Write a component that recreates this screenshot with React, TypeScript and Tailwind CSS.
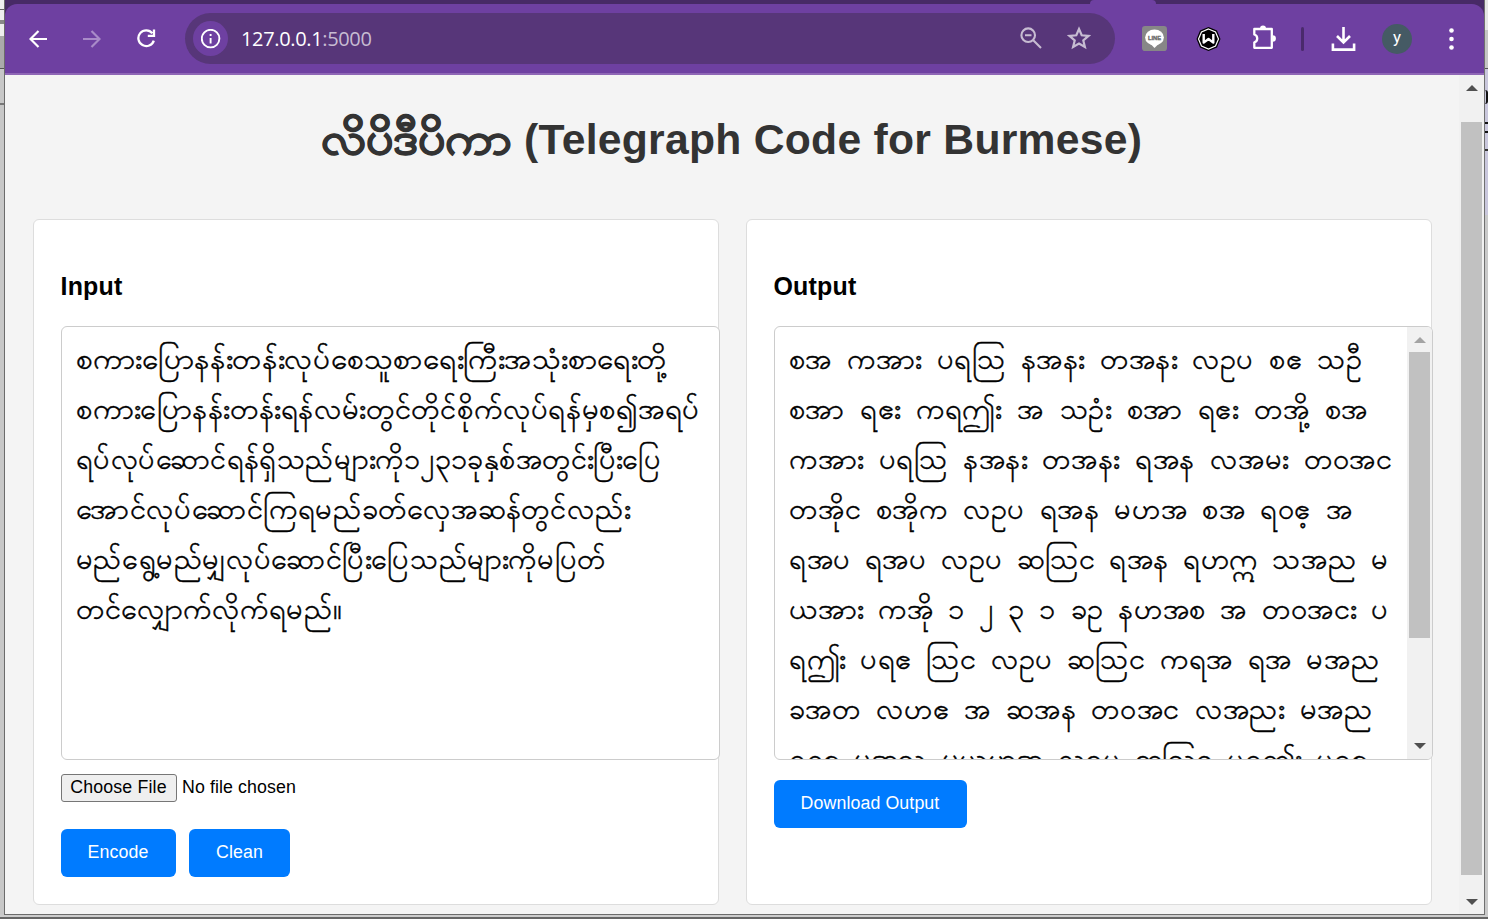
import { ReactNode, useLayoutEffect, useRef, useState } from "react";

type Line = { text: string; width: number };

const inputLines: Line[] = [
  { text: "စကားပြောနန်းတန်းလုပ်စေသူစာရေးကြီးအသုံးစာရေးတို့", width: 591 },
  { text: "စကားပြောနန်းတန်းရန်လမ်းတွင်တိုင်စိုက်လုပ်ရန်မှစ၍အရပ်", width: 624 },
  { text: "ရပ်လုပ်ဆောင်ရန်ရှိသည်များကို၁၂၃၁ခုနှစ်အတွင်းပြီးပြေ", width: 585 },
  { text: "အောင်လုပ်ဆောင်ကြရမည်ခတ်လှေအဆန်တွင်လည်း", width: 554 },
  { text: "မည်ရွေ့မည်မျှလုပ်ဆောင်ပြီးပြေသည်များကိုမပြတ်", width: 530 },
  { text: "တင်လျှောက်လိုက်ရမည်။", width: 266 },
];

const outputLines: Line[] = [
  { text: "စအ ကအား ပရဩ နအနး တအနး လဥပ စဧ သဦ", width: 573 },
  { text: "စအာ ရဧး ကရဤး အ သဥံး စအာ ရဧး တအို့ စအ", width: 579 },
  { text: "ကအား ပရဩ နအနး တအနး ရအန လအမး တဝအင", width: 604 },
  { text: "တအိုင စအိုက လဥပ ရအန မဟအ စအ ရဝဧ့ အ", width: 563 },
  { text: "ရအပ ရအပ လဥပ ဆဩင ရအန ရဟဣ သအည မ", width: 599 },
  { text: "ယအား ကအို ၁ ၂ ၃ ၁ ခဥ နဟအစ အ တဝအငး ပ", width: 600 },
  { text: "ရဤး ပရဧ ဩင လဥပ ဆဩင ကရအ ရအ မအည", width: 590 },
  { text: "ခအတ လဟဧ အ ဆအန တဝအင လအညး မအည", width: 584 },
  { text: "ရဝဧ့ မအည မယဟအ လဥပ ဆဩင ပရဤး ပရဧ", width: 579 },
];

// Horizontal stretch of the glyphs in lines that are justified by their spaces.
const GLYPH_STRETCH = 1.03;

function FittedLine({ text, width }: Line) {
  const ref = useRef<HTMLSpanElement>(null);
  const [fit, setFit] = useState({ scale: 1, gap: 0 });

  useLayoutEffect(() => {
    const natural = ref.current!.offsetWidth;
    const spaces = text.split(" ").length - 1;
    setFit(
      spaces > 0
        ? { scale: GLYPH_STRETCH, gap: (width / GLYPH_STRETCH - natural) / spaces }
        : { scale: width / natural, gap: 0 },
    );
  }, [text, width]);

  return (
    <div className="h-[50px] whitespace-pre">
      <span
        ref={ref}
        className="inline-block origin-left"
        style={{ transform: `scaleX(${fit.scale})`, wordSpacing: `${fit.gap}px` }}
      >
        {text}
      </span>
    </div>
  );
}

function Lines({ lines }: { lines: Line[] }) {
  return (
    <>
      {lines.map((line, i) => (
        <FittedLine key={i} {...line} />
      ))}
    </>
  );
}

function Arrow({ down = false, muted = false }: { down?: boolean; muted?: boolean }) {
  return (
    <svg width="12" height="6" viewBox="0 0 12 6" className={muted ? "text-[#a3a3a3]" : "text-[#505050]"}>
      <path d={down ? "M0 0H12L6 6Z" : "M0 6H12L6 0Z"} fill="currentColor" />
    </svg>
  );
}

function Card({ title, children }: { title: string; children: ReactNode }) {
  return (
    <section className="h-[686px] w-[686px] rounded-[6px] border border-[#ddd] bg-white px-[27px] pt-[52px]">
      <h3 className="-ml-px h-[54px] pl-[0.5px] text-[24.96px] leading-[29px] font-bold tracking-[0.2px] text-black">{title}</h3>
      {children}
    </section>
  );
}

function Button({ children, className }: { children: ReactNode; className: string }) {
  return (
    <button className={`h-12 rounded-[6px] bg-[#007bff] pb-[3px] text-center text-[17.78px] leading-5 tracking-[0.1px] text-white ${className}`}>
      {children}
    </button>
  );
}

function Toolbar() {
  return (
    <header className="flex h-[71px] shrink-0 items-start rounded-t-[12px] border-b-2 border-[#8e66b5] bg-[#6e40a1] pt-[9px]">
      <div className="flex h-[51px] w-[180px] items-center text-white">
        <svg className="ml-[24px]" width="18" height="18" viewBox="0 0 18 18" fill="none" stroke="currentColor" strokeWidth="2.2">
          <path d="M18 9H2M9.5 1L1.5 9L9.5 17" />
        </svg>
        <svg className="ml-[36px] text-[#a98bc8]" width="18" height="18" viewBox="0 0 18 18" fill="none" stroke="currentColor" strokeWidth="2.2">
          <path d="M0 9H16M8.5 1L16.5 9L8.5 17" />
        </svg>
        <svg className="ml-[36px]" width="19" height="19" viewBox="0 0 19 19" fill="none" stroke="currentColor" strokeWidth="2.3">
          <path d="M15.4 4.2A7.9 7.9 0 1 0 16.8 11.6M17 .5V6.8H10.8" />
        </svg>
      </div>
      <div className="flex h-[51px] w-[930px] items-center rounded-full bg-[#573679] pl-[8px] text-[#c7bcd2]">
        <div className="flex size-[35px] items-center justify-center rounded-full bg-[#6e40a1] text-white">
          <svg width="20" height="20" viewBox="0 0 20 20" fill="none" stroke="currentColor" strokeWidth="1.9">
            <circle cx="9.6" cy="9.6" r="8.8" />
            <path d="M9.6 9V14.4M9.6 5V7" />
          </svg>
        </div>
        <div className="ml-[13px] w-[779px] font-['Open_Sans',sans-serif] text-[20px] leading-6 tracking-[-0.35px]">
          <span className="text-white">127.0.0.1</span>
          <span>:5000</span>
        </div>
        <svg className="-mt-px" width="22" height="22" viewBox="0 0 22 22" fill="none" stroke="currentColor" strokeWidth="2.1">
          <circle cx="8.2" cy="8.2" r="6.8" />
          <path d="M13 13L21 21M5 8.2H11.5" />
        </svg>
        <svg className="-mt-px ml-[25px]" width="24" height="24" viewBox="0 0 24 24" fill="none" stroke="currentColor" strokeWidth="2.2">
          <path d="M12 3L14.7 9.3L21.5 9.9L16.3 14.4L17.9 21L12 17.5L6.1 21L7.7 14.4L2.5 9.9L9.3 9.3Z" />
        </svg>
      </div>
      <div className="flex h-[51px] items-center text-white">
        <svg className="ml-[27px]" width="25" height="25" viewBox="0 0 24 24">
          <rect width="24" height="24" rx="3" fill="#878787" />
          <ellipse cx="12" cy="11" rx="9" ry="7.6" fill="#fff" />
          <path d="M8 17L12 21L17 16Z" fill="#fff" />
          <text x="12" y="13" textAnchor="middle" fontSize="5.5" fontWeight="700" fontFamily="Liberation Sans" fill="#666" stroke="#666" strokeWidth=".3">LINE</text>
        </svg>
        <svg className="ml-[29px]" width="25" height="24" viewBox="0 0 24 24">
          <path d="M12 0L20.5 3.5L24 12L20.5 20.5L12 24L3.5 20.5L0 12L3.5 3.5Z" fill="#000" />
          <path d="M12 2L19 5L22 12L19 19L12 22L5 19L2 12L5 5Z" fill="none" stroke="#fff" strokeWidth="1.2" />
          <path d="M7.2 7V15.6L12 12L16.8 15.6V7" fill="none" stroke="#fff" strokeWidth="2.4" strokeLinejoin="round" />
        </svg>
        <svg className="-mt-[3px] ml-[30px]" width="26" height="26" viewBox="0 0 26 26">
          <path d="M3.3 5H20.8V23.8H3.3V18.3C7.2 17.3 7.2 11.5 3.3 10.5Z" fill="none" stroke="currentColor" strokeWidth="2.3" strokeLinejoin="round" />
          <path d="M9 4.5A3 3 0 0 1 15 4.5ZM21.6 11.2A3 3 0 0 1 21.6 17.8Z" fill="currentColor" />
        </svg>
        <div className="ml-[24px] h-6 w-[3px] rounded bg-[#4a2a6c]" />
        <svg className="ml-[27px]" width="25" height="24" viewBox="0 0 24 24" fill="none" stroke="currentColor" strokeWidth="2.6">
          <path d="M12 0V15M5.5 9L12 15.5L18.5 9M1.4 16.5V22.6H22.6V16.5" />
        </svg>
        <div className="ml-[26px] flex size-[30px] items-center justify-center rounded-full bg-[#455a64] pb-[2px] font-[Roboto] text-[17px]">y</div>
        <svg className="ml-[37px]" width="5" height="22" viewBox="0 0 5 22" fill="currentColor">
          <circle cx="2.5" cy="2.5" r="2.3" />
          <circle cx="2.5" cy="11" r="2.3" />
          <circle cx="2.5" cy="19.5" r="2.3" />
        </svg>
      </div>
    </header>
  );
}

function LeftEdge() {
  return (
    <div className="flex w-[5px] shrink-0 flex-col border-r border-[#6b6b6b] bg-[#c7c7c7]">
      <div className="h-[10px] border-b border-[#666] bg-[#efefef]" />
      <div className="h-[14px] border-b-4 border-[#888] bg-[#eee]" />
      <div className="h-[12px] bg-[#eee]" />
      <div className="h-[33px] border-b border-[#555] bg-[#aaa]" />
      <div className="h-[36px] border-b-2 border-[#777]" />
    </div>
  );
}

function RightEdge() {
  return (
    <div className="flex w-1 shrink-0 flex-col overflow-hidden border-l border-[#707070] bg-[#c9c9c9]">
      <div className="h-[30px] bg-[#e5e5e5]" />
      <div className="h-[39px] border-b border-[#555] bg-[#c5c5c5]" />
      <div className="h-[146px] bg-[#c9c7dc]">
        <div className="mt-[21px] h-[14px] w-[3px] rounded-r-full border-r-2 border-[#111]" />
        <div className="mt-[18px] h-[11px] w-1 border-y-2 border-[#111]" />
        <div className="mt-[16px] h-[2px] w-1 bg-[#333]" />
      </div>
    </div>
  );
}

export default function App() {
  return (
    <div className="flex h-[919px] w-[1488px] flex-col overflow-hidden bg-[#c3c3c3] font-['Liberation_Sans',Arial,sans-serif]">
      <div className="flex h-[915px]">
        <LeftEdge />
        <div className="flex w-[1479px] flex-col bg-[#472a66]">
          <div className="flex h-1 shrink-0 justify-end">
            <div className="mr-[328px] h-1 w-[66px] rounded-t-[4px] bg-[#6e40a1]" />
          </div>
          <Toolbar />
          <div className="flex h-[840px] border-b border-[#6b6b6b] bg-[#f4f4f4]">
            <main className="w-[1454px] px-7">
              <h1 className="flex h-[144px] items-start pt-[39px] pl-[288px] text-[42.67px] leading-[50px] font-bold whitespace-pre text-[#333]">
                <span className="w-[203px]">
                  <span className="-mt-[3px] inline-block origin-left scale-x-[1.075] text-[44.8px] leading-[50px] [-webkit-text-stroke:0.9px_#333]">
                    လိပိဒီပိကာ
                  </span>
                </span>
                <span className="tracking-[0.27px]">(Telegraph Code for Burmese)</span>
              </h1>
              <div className="flex gap-[27px]">
                <Card title="Input">
                  <div className="h-[434px] w-[659px] rounded-[6px] border border-[#ccc] bg-white px-[14px] pt-[8px] text-[28px] leading-[50px] text-black [-webkit-text-stroke:0.4px_black]">
                    <Lines lines={inputLines} />
                  </div>
                  <div className="mt-[14px] flex h-7 items-center text-[17.78px] leading-5 tracking-[0.1px] text-black">
                    <button className="h-7 w-[116px] rounded-[3px] border border-[#767676] bg-[#efefef] pr-[1px] pb-[2px] tracking-[0.15px]">Choose File</button>
                    <span className="ml-[5px] pb-[2px]">No file chosen</span>
                  </div>
                  <div className="mt-[27px] flex gap-[13px]">
                    <Button className="w-[115px] pr-px">Encode</Button>
                    <Button className="w-[101px]">Clean</Button>
                  </div>
                </Card>
                <Card title="Output">
                  <div className="flex h-[434px] w-[659px] overflow-hidden rounded-[6px] border border-[#ccc] bg-white">
                    <div className="w-[632px] shrink-0 overflow-hidden pt-[8px] pl-[14px] text-[28px] leading-[50px] text-black [-webkit-text-stroke:0.4px_black]">
                      <Lines lines={outputLines} />
                    </div>
                    <div className="flex w-[25px] flex-col items-center bg-[#f1f1f1]">
                      <div className="flex h-[25px] items-center pt-[1px]"><Arrow muted /></div>
                      <div className="h-[286px] w-[21px] shrink-0 bg-[#c1c1c1]" />
                      <div className="mt-[105px]"><Arrow down /></div>
                    </div>
                  </div>
                  <Button className="mt-5 w-[193px] pr-[7px] pl-[6px]">Download Output</Button>
                </Card>
              </div>
            </main>
            <div className="flex w-[25px] flex-col items-center bg-[#f1f1f1]">
              <div className="flex h-[47px] items-start pt-[10px]"><Arrow /></div>
              <div className="h-[753px] w-[21px] shrink-0 bg-[#c1c1c1]" />
              <div className="mt-[24px]"><Arrow down /></div>
            </div>
          </div>
        </div>
        <RightEdge />
      </div>
      <div className="h-1 border-t border-b-2 border-t-[#ccc] border-b-[#666] bg-[#ccc]" />
    </div>
  );
}
